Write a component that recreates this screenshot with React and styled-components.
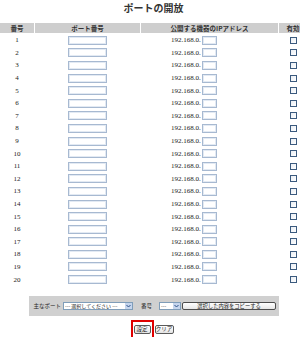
import React from 'react';
import styled, { createGlobalStyle } from 'styled-components';

const GlobalStyle = createGlobalStyle`
  html, body {
    margin: 0;
    padding: 0;
    background: #ffffff;
    overflow: hidden;
  }
  body {
    font-family: "Noto Sans CJK JP", "Liberation Sans", sans-serif;
    color: #222222;
  }
`;

const Page = styled.div`
  width: 307px;
`;

const Title = styled.h1`
  margin: 0;
  height: 23px;
  padding-top: 3px;
  box-sizing: border-box;
  text-align: center;
  font-size: 10px;
  line-height: 10px;
  font-weight: bold;
  color: #333333;
`;

const columns = '34px 105px 137px 28px';

const HeadRow = styled.div`
  display: grid;
  grid-template-columns: ${columns};
  column-gap: 1px;
  height: 10px;
`;

const HeadCell = styled.div`
  background: #cecece;
  display: flex;
  align-items: center;
  justify-content: center;
  font-size: 6.5px;
  font-weight: bold;
  color: #333333;
  white-space: nowrap;
  overflow: hidden;
`;

const Body = styled.div`
  display: grid;
  grid-template-columns: ${columns};
  grid-auto-rows: 12.6px;
  column-gap: 1px;
  padding-top: 1px;
`;

const Cell = styled.div`
  display: flex;
  align-items: center;
  justify-content: ${(p) => p.$justify || 'center'};
  padding-right: ${(p) => p.$padRight || 0}px;
`;

const Num = styled.span`
  font-family: "Liberation Serif", serif;
  font-size: 7px;
  color: #222222;
`;

const TextBox = styled.span`
  display: inline-block;
  width: ${(p) => p.$w}px;
  height: 9px;
  box-sizing: border-box;
  border: 1px solid #a7b9d1;
  box-shadow: inset 0 0 0 1px #e3eaf3;
  background: #ffffff;
`;

const IpPrefix = styled.span`
  font-family: "Liberation Serif", serif;
  font-size: 7px;
  color: #222222;
  margin-right: 1px;
`;

const IpGroup = styled.div`
  display: flex;
  align-items: center;
  margin-left: 30px;
`;

const Check = styled.span`
  display: inline-block;
  width: 7px;
  height: 7px;
  box-sizing: border-box;
  border: 1px solid #3b5a7e;
  background: linear-gradient(135deg, #e8edf3, #ffffff);
`;

const Toolbar = styled.div`
  margin: 10px auto 0;
  width: 250px;
  height: 20px;
  background: #d0d0d0;
  display: flex;
  align-items: center;
  padding-left: 5px;
  box-sizing: border-box;
  font-size: 5.5px;
  color: #222222;
`;

const Label = styled.span`
  white-space: nowrap;
  margin-right: ${(p) => p.$gap}px;
`;

const Select = styled.div`
  width: ${(p) => p.$w}px;
  height: 8px;
  box-sizing: border-box;
  border: 1px solid #7f9db9;
  background: #ffffff;
  display: flex;
  align-items: stretch;
  margin-right: ${(p) => p.$gap || 0}px;
`;

const SelectText = styled.span`
  flex: 1;
  font-size: 5px;
  line-height: 6px;
  padding-left: 1px;
  white-space: nowrap;
  overflow: hidden;
`;

const Arrow = styled.span`
  width: 7px;
  background: #c5d5ed;
  display: flex;
  align-items: center;
  justify-content: center;
`;

const CopyButton = styled.button`
  width: 94px;
  height: 8px;
  padding: 0;
  border: 1px solid #4d4d4d;
  border-radius: 2px;
  background: linear-gradient(#ffffff, #e6e6e6);
  font-family: inherit;
  font-size: 5.3px;
  line-height: 6px;
  color: #222222;
  white-space: nowrap;
`;

const Actions = styled.div`
  margin-top: 4px;
  display: flex;
  justify-content: center;
  align-items: flex-start;
  gap: 1px;
  padding-right: 3px;
`;

const Highlight = styled.div`
  display: flex;
  border: 2px solid #e00000;
  padding: 3px 1px 4px 1px;
`;

const SmallButton = styled.button`
  display: block;
  height: 9px;
  width: ${(p) => p.$w}px;
  padding: 0;
  margin-top: ${(p) => p.$top || 0}px;
  border: 1px solid #5a5a5a;
  border-radius: 2px;
  background: linear-gradient(#ffffff, #e4e4e4);
  font-family: inherit;
  font-size: 5.5px;
  line-height: 7px;
  color: #222222;
  white-space: nowrap;
`;

const Chevron = () => (
  <svg width="5" height="4" viewBox="0 0 5 4">
    <path d="M0.5 1 L2.5 3 L4.5 1" fill="none" stroke="#2b4f86" strokeWidth="1" />
  </svg>
);

const rows = Array.from({ length: 20 }, (_, i) => i + 1);

export default function App() {
  return (
    <Page>
      <GlobalStyle />
      <Title>ポートの開放</Title>
      <HeadRow>
        <HeadCell>番号</HeadCell>
        <HeadCell>ポート番号</HeadCell>
        <HeadCell>公開する機器のIPアドレス</HeadCell>
        <HeadCell>有効</HeadCell>
      </HeadRow>
      <Body>
        {rows.map((n) => (
          <React.Fragment key={n}>
            <Cell>
              <Num>{n}</Num>
            </Cell>
            <Cell>
              <TextBox $w={39} />
            </Cell>
            <Cell $justify="flex-start">
              <IpGroup>
                <IpPrefix>192.168.0.</IpPrefix>
                <TextBox $w={15} />
              </IpGroup>
            </Cell>
            <Cell $justify="flex-end" $padRight={10}>
              <Check />
            </Cell>
          </React.Fragment>
        ))}
      </Body>
      <Toolbar>
        <Label $gap={2}>主なポート</Label>
        <Select $w={70} $gap={8}>
          <SelectText>--- 選択してください ---</SelectText>
          <Arrow>
            <Chevron />
          </Arrow>
        </Select>
        <Label $gap={7}>番号</Label>
        <Select $w={22} $gap={1}>
          <SelectText>---</SelectText>
          <Arrow>
            <Chevron />
          </Arrow>
        </Select>
        <CopyButton>選択した内容をコピーする</CopyButton>
      </Toolbar>
      <Actions>
        <Highlight>
          <SmallButton $w={17}>設定</SmallButton>
        </Highlight>
        <SmallButton $w={19} $top={5}>
          クリア
        </SmallButton>
      </Actions>
    </Page>
  );
}
